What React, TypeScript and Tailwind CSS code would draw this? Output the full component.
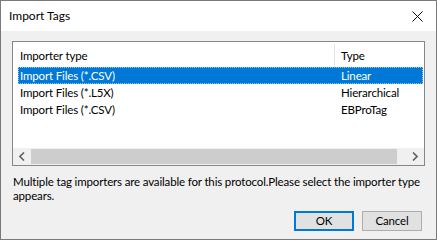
import React from "react";

const rows = [
  { name: "Import Files (*.CSV)", type: "Linear" },
  { name: "Import Files (*.L5X)", type: "Hierarchical" },
  { name: "Import Files (*.CSV)", type: "EBProTag" },
];

export default function App() {
  const selected = 0;

  return (
    <div
      className="w-[437px] h-[240px] border border-[#7a7a7a] bg-[#f0f0f0] flex flex-col text-[11.5px] tracking-[-0.15px] text-black"
      style={{ fontFamily: '"Segoe UI", Lato, "Liberation Sans", sans-serif' }}
    >
      {/* Title bar */}
      <div className="h-[30px] bg-white flex items-center justify-between pl-[8px] pr-[13px]">
        <span className="text-[12px] tracking-normal">Import Tags</span>
        <svg width="11" height="11" viewBox="0 0 11 11" className="mt-[1px]">
          <path d="M0.5 0.5 L10.5 10.5 M10.5 0.5 L0.5 10.5" stroke="#111" strokeWidth="1" />
        </svg>
      </div>

      {/* Body */}
      <div className="flex-1 flex flex-col px-[11px] pt-[10px]">
        {/* List view */}
        <div className="h-[125px] border border-[#828790] bg-white flex flex-col">
          <div className="flex-1 pl-[5px] pr-[1px] flex flex-col">
            {/* Header */}
            <div className="h-[25px] flex">
              <div className="flex-1 flex items-end pb-[3px] pl-[2px]">Importer type</div>
              <div className="w-[89px] border-l border-[#e5e5e5] mt-[2px] flex items-end pb-[3px] pl-[6px]">
                Type
              </div>
            </div>
            {/* Rows */}
            {rows.map((r, i) => (
              <div
                key={i}
                className={`h-[17px] flex items-center ${
                  i === selected
                    ? "bg-[#0078d7] text-white outline outline-1 outline-dotted outline-offset-[-1px] outline-[#9fc6ea]"
                    : ""
                }`}
              >
                <div className="flex-1 pl-[2px]">{r.name}</div>
                <div className="w-[89px] pl-[7px]">{r.type}</div>
              </div>
            ))}
          </div>
          {/* Horizontal scrollbar */}
          <div className="h-[17px] flex bg-[#f0f0f0]">
            <div className="w-[18px] flex items-center justify-center">
              <svg width="6" height="9" viewBox="0 0 6 9">
                <path d="M5 0.5 L1 4.5 L5 8.5" stroke="#606060" strokeWidth="1.6" fill="none" />
              </svg>
            </div>
            <div className="flex-1 flex items-center pr-[27px]">
              <div className="h-[15px] w-full bg-[#cdcdcd]" />
            </div>
            <div className="w-[18px] flex items-center justify-center -ml-[18px]">
              <svg width="6" height="9" viewBox="0 0 6 9">
                <path d="M1 0.5 L5 4.5 L1 8.5" stroke="#606060" strokeWidth="1.6" fill="none" />
              </svg>
            </div>
          </div>
        </div>

        {/* Message */}
        <p className="mt-[9px] leading-[14px] pl-[1px]">
          Multiple tag importers are available for this protocol.Please select the importer type appears.
        </p>

        {/* Buttons */}
        <div className="mt-auto mb-[8px] flex justify-end gap-[8px] pr-[3px]">
          <button className="w-[60px] h-[20px] bg-[#e1e1e1] border-2 border-[#0078d7] flex items-center justify-center">
            OK
          </button>
          <button className="w-[60px] h-[20px] bg-[#e1e1e1] border border-[#adadad] flex items-center justify-center">
            Cancel
          </button>
        </div>
      </div>
    </div>
  );
}
